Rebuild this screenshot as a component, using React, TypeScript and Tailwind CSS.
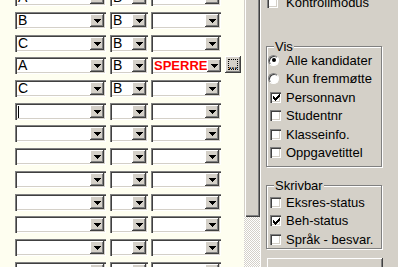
import * as React from 'react';

// Windows classic style form: rows of combo boxes on the left, option panel on the right

interface Row {
  a: string;
  b: string;
  c: string;
  dots?: boolean;
  caret?: boolean;
}

const rows: Row[] = [
  { a: 'A', b: 'B', c: '' },
  { a: 'B', b: 'B', c: '' },
  { a: 'C', b: 'B', c: '' },
  { a: 'A', b: 'B', c: 'SPERRE', dots: true },
  { a: 'C', b: 'B', c: '' },
  { a: '', b: '', c: '', caret: true },
  { a: '', b: '', c: '' },
  { a: '', b: '', c: '' },
  { a: '', b: '', c: '' },
  { a: '', b: '', c: '' },
  { a: '', b: '', c: '' },
  { a: '', b: '', c: '' },
  { a: '', b: '', c: '' },
];

const DropBtn = () => (
  <div className="flex h-[13px] w-[14px] shrink-0 items-center justify-center bg-[#d4d0c8] shadow-[inset_-1px_-1px_0_#404040,inset_1px_1px_0_#ffffff,inset_-2px_-2px_0_#808080]">
    <svg width="7" height="4" viewBox="0 0 7 4" className="mt-[1px]">
      <path d="M0 0h7v1H0zM1 1h5v1H1zM2 2h3v1H2zM3 3h1v1H3z" fill="#000" />
    </svg>
  </div>
);

const Combo: React.FC<{ value: string; width: string; red?: boolean; caret?: boolean }> = ({ value, width, red, caret }) => (
  <div className={`flex h-[17px] shrink-0 bg-white p-[2px] shadow-[inset_1px_1px_0_#808080,inset_2px_2px_0_#404040,inset_-1px_-1px_0_#ffffff,inset_-2px_-2px_0_#d4d0c8] ${width}`}>
    <div
      className={`relative -my-[2px] h-[17px] flex-1 overflow-x-clip whitespace-nowrap pl-[1px] leading-[17px] ${
        red ? 'text-[13px] font-bold text-[#ff0000]' : 'text-[14px] text-black'
      }`}
    >
      {value}
      {caret && <span className="absolute left-[1px] top-[3px] h-[12px] w-[1px] bg-black" />}
    </div>
    <DropBtn />
  </div>
);

const Check: React.FC<{ checked?: boolean }> = ({ checked }) => (
  <div className="flex h-[11px] w-[11px] shrink-0 items-center justify-center bg-white shadow-[inset_1px_1px_0_#808080,inset_2px_2px_0_#404040,inset_-1px_-1px_0_#ffffff,inset_-2px_-2px_0_#d4d0c8]">
    {checked && (
      <svg width="7" height="7" viewBox="0 0 7 7" className="ml-[1px] mt-[1px]">
        <path d="M0 2h1v3H0zM1 3h1v3H1zM2 4h1v3H2zM3 3h1v3H3zM4 2h1v3H4zM5 1h1v3H5zM6 0h1v3H6z" fill="#000" />
      </svg>
    )}
  </div>
);

const Radio: React.FC<{ checked?: boolean }> = ({ checked }) => (
  <div className="flex h-[11px] w-[11px] shrink-0 items-center justify-center rounded-full border border-[#808080] border-b-white border-r-white bg-white shadow-[inset_1px_1px_0_#404040]">
    {checked && <div className="h-[4px] w-[4px] rounded-full bg-black" />}
  </div>
);

const Item: React.FC<{ label: string; radio?: boolean; checked?: boolean }> = ({ label, radio, checked }) => (
  <div className="flex h-[18.5px] items-center pl-[1px]">
    <div className="flex w-[14px] shrink-0">
      {radio ? <Radio checked={checked} /> : <div className="ml-[2px]"><Check checked={checked} /></div>}
    </div>
    <span className="ml-[4px] whitespace-nowrap">{label}</span>
  </div>
);

const Group: React.FC<{ title: string; height: string; pad: string; children: React.ReactNode }> = ({ title, height, pad, children }) => (
  <div className={`relative ml-[5px] w-[116px] border border-[#808080] shadow-[inset_1px_1px_0_#ffffff,1px_1px_0_#ffffff] ${height} ${pad}`}>
    <span className="absolute -top-[8px] left-[7px] bg-[#d4d0c8] px-[1px]">{title}</span>
    {children}
  </div>
);

export default function App() {
  return (
    <div className="flex h-[267px] w-[398px] overflow-hidden font-['Liberation_Sans',Arial,sans-serif]">
      <div className="w-[244px] shrink-0 overflow-hidden bg-[#fefef0]">
        <div className="-mt-[10.7px] flex flex-col">
          {rows.map((r, i) => (
            <div key={i} className="flex h-[22.7px] shrink-0 items-start pl-[15px]">
              <Combo value={r.a} width="w-[91px]" caret={r.caret} />
              <div className="ml-[4px]">
                <Combo value={r.b} width="w-[38px]" />
              </div>
              <div className="ml-[3px]">
                <Combo value={r.c} width="w-[70px]" red />
              </div>
              {r.dots && (
                <div className="-mt-[1px] ml-[4px] h-[17px] w-[16px] bg-[#d4d0c8] p-[3px] shadow-[inset_-1px_-1px_0_#404040,inset_1px_1px_0_#ffffff,inset_-2px_-2px_0_#808080]">
                  <div className="flex h-full w-full items-end justify-center border border-dotted border-black">
                    <span className="text-[10px] font-bold leading-[7px] text-black">...</span>
                  </div>
                </div>
              )}
            </div>
          ))}
        </div>
      </div>

      <div className="flex w-[16px] shrink-0 flex-col">
        <div className="h-[217px] bg-[#d4d0c8] shadow-[inset_1px_0_0_#d4d0c8,inset_2px_0_0_#ffffff,inset_-1px_-1px_0_#404040,inset_-2px_-2px_0_#808080]" />
        <div className="flex-1 bg-[image:repeating-conic-gradient(#d4d0c8_0%_25%,#ffffff_0%_50%)] bg-[length:2px_2px]" />
      </div>

      <div className="flex w-[138px] shrink-0 flex-col border-l border-white bg-[#d4d0c8] text-[13px] leading-[15px] text-black">
        <div className="-mt-[5px] flex h-[15px] shrink-0 items-center pl-[6px]">
          <Check />
          <span className="ml-[8px]">Kontrollmodus</span>
        </div>

        <div className="mt-[36px]">
          <Group title="Vis" height="h-[121px]" pad="pt-[4px]">
            <Item label="Alle kandidater" radio checked />
            <Item label="Kun fremmøtte" radio />
            <Item label="Personnavn" checked />
            <Item label="Studentnr" />
            <Item label="Klasseinfo." />
            <Item label="Oppgavetittel" />
          </Group>
        </div>

        <div className="mt-[18px]">
          <Group title="Skrivbar" height="h-[64px]" pad="pt-[7px]">
            <Item label="Eksres-status" />
            <Item label="Beh-status" checked />
            <Item label="Språk - besvar." />
          </Group>
        </div>

        <div className="ml-[6px] mt-[9px] h-[20px] w-[116px] shrink-0 bg-[#d4d0c8] shadow-[inset_-1px_-1px_0_#404040,inset_1px_1px_0_#ffffff,inset_-2px_-2px_0_#808080]" />
      </div>
    </div>
  );
}
